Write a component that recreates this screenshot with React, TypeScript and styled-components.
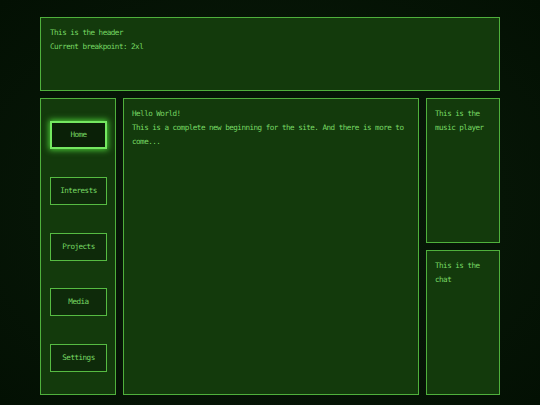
import React from "react";
import styled, { createGlobalStyle } from "styled-components";

const GlobalStyle = createGlobalStyle`
    html, body {
        margin: 0;
        padding: 0;
        height: 100%;
    }

    body {
        background: radial-gradient(ellipse at center, #071a07 0%, #061506 60%, #031003 100%);
        color: #78d964;
        font-family: "DejaVu Sans Mono", "Liberation Mono", monospace;
        font-size: 7.6px;
        letter-spacing: -0.52px;
        line-height: 14px;
    }
`;

const navItems = ["Home", "Interests", "Projects", "Media", "Settings"];

const App = () => {
    return (
        <>
            <GlobalStyle />
            <PageContainer>
                <Header>
                    <p>This is the header</p>
                    <p>Current breakpoint: 2xl</p>
                </Header>

                <BodyRow>
                    <NavPanel>
                        {navItems.map((item, index) => (
                            <NavButton key={item} active={index === 0}>
                                {item}
                            </NavButton>
                        ))}
                    </NavPanel>

                    <MainPanel>
                        <p>Hello World!</p>
                        <p>This is a complete new beginning for the site. And there is more to come...</p>
                    </MainPanel>

                    <SideColumn>
                        <SidePanel>
                            <p>This is the music player</p>
                        </SidePanel>
                        <SidePanel>
                            <p>This is the chat</p>
                        </SidePanel>
                    </SideColumn>
                </BodyRow>
            </PageContainer>
        </>
    );
};

const PageContainer = styled.div`
    width: 460px;
    margin: 0 auto;
    padding-top: 17px;

    display: flex;
    flex-direction: column;
    gap: 7px;

    p {
        margin: 0;
    }
`;

const Panel = styled.div`
    box-sizing: border-box;
    background: #133a0c;
    border: 1px solid #4fb03c;
`;

const Header = styled(Panel)`
    height: 74px;
    padding: 8px 9px;
`;

const BodyRow = styled.div`
    height: 297px;

    display: grid;
    grid-template-columns: 76px 296px 74px;
    gap: 7px;
`;

const NavPanel = styled(Panel)`
    padding: 22px 8px 22px 9px;

    display: flex;
    flex-direction: column;
    justify-content: space-between;
`;

const NavButton = styled.div<{ active?: boolean }>`
    box-sizing: border-box;
    width: 57px;
    height: 28px;

    display: flex;
    align-items: center;
    justify-content: center;

    background: ${({ active }) => (active ? "#0a2007" : "#0e2a0a")};
    border: ${({ active }) => (active ? "2px solid #74e860" : "1px solid #56bb42")};
    box-shadow: ${({ active }) => (active ? "0 0 6px 1px #4fd23a" : "none")};
`;

const MainPanel = styled(Panel)`
    padding: 8px 8px;
`;

const SideColumn = styled.div`
    display: grid;
    grid-template-rows: 1fr 1fr;
    gap: 7px;
`;

const SidePanel = styled(Panel)`
    padding: 8px 8px;
`;

export default App;
